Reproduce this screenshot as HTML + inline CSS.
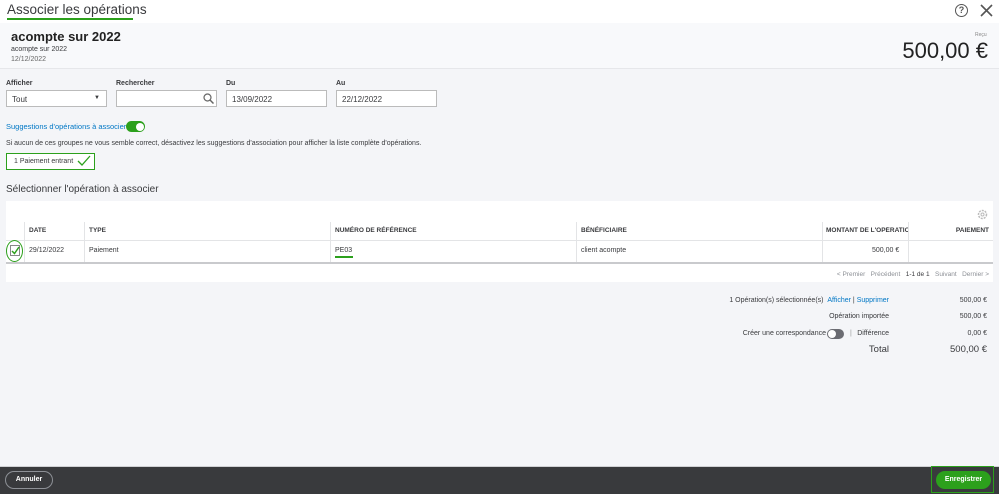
<!DOCTYPE html>
<html><head><meta charset="utf-8"><style>
*{margin:0;padding:0;box-sizing:border-box}
body{width:999px;height:494px;overflow:hidden;background:#f4f5f8;font-family:"Liberation Sans",sans-serif;color:#393a3d;position:relative}
.a{position:absolute;white-space:nowrap}
.inp{position:absolute;height:17px;background:#fff;border:1px solid #bbb;font-size:8px;padding:4px 5px}
.lbl{position:absolute;font-size:7px;color:#393a3d}
.th{position:absolute;top:227px;font-size:6.5px;font-weight:bold;color:#393a3d;white-space:nowrap}
.td{position:absolute;top:247px;font-size:7px;color:#393a3d}
.sep{position:absolute;width:1px;background:#e3e4e6}
.r{position:absolute;text-align:right;font-size:7px;white-space:nowrap;line-height:10px}
</style></head><body>
<div class="a" style="left:0;top:0;width:999px;height:23px;background:#fff"></div>
<div class="a" style="left:7px;top:2px;font-size:13.5px;color:#393a3d;line-height:16px">Associer les opérations</div>
<div class="a" style="left:7px;top:18px;width:126px;height:2px;background:#2ca01c"></div>
<div class="a" style="left:955px;top:4px;width:13px;height:13px;border:1.5px solid #555;border-radius:50%;font-size:9px;font-weight:bold;text-align:center;line-height:10px;color:#555">?</div>
<svg class="a" style="left:980px;top:4px" width="13" height="13"><path d="M1 1L12 12M12 1L1 12" stroke="#555" stroke-width="1.6"/></svg>
<div class="a" style="left:0;top:23px;width:999px;height:46px;background:#f8f9fb;border-bottom:1px solid #e6e7ea"></div>
<div class="a" style="left:11px;top:29px;font-size:13px;font-weight:bold;color:#222">acompte sur 2022</div>
<div class="a" style="left:11px;top:46px;font-size:7px">acompte sur 2022</div>
<div class="a" style="left:11px;top:56px;font-size:7px;color:#666">12/12/2022</div>
<div class="a" style="left:975px;top:32px;font-size:5px;color:#888">Reçu</div>
<div class="a" style="right:11px;top:38px;font-size:22px;color:#222">500,00 €</div>
<div class="lbl" style="left:6px;top:80px;font-weight:bold">Afficher</div>
<div class="lbl" style="left:116px;top:80px;font-weight:bold">Rechercher</div>
<div class="lbl" style="left:226px;top:80px;font-weight:bold">Du</div>
<div class="lbl" style="left:336px;top:80px;font-weight:bold">Au</div>
<div class="inp" style="left:6px;top:90px;width:101px">Tout<span style="position:absolute;right:6px;top:4px;font-size:6px">▼</span></div>
<div class="inp" style="left:116px;top:90px;width:101px"><svg style="position:absolute;right:2px;top:2px" width="11" height="11"><circle cx="4.5" cy="4.5" r="3.5" stroke="#666" fill="none" stroke-width="1.2"/><path d="M7 7L10.5 10.5" stroke="#666" stroke-width="1.5"/></svg></div>
<div class="inp" style="left:226px;top:90px;width:101px">13/09/2022</div>
<div class="inp" style="left:336px;top:90px;width:101px">22/12/2022</div>
<div class="a" style="left:6px;top:122px;font-size:7.5px;color:#0077c5">Suggestions d'opérations à associer</div>
<div class="a" style="left:126px;top:121px;width:19px;height:11px;border-radius:6px;background:#2ca01c"><div style="position:absolute;right:1.5px;top:1.5px;width:8px;height:8px;border-radius:50%;background:#fff"></div></div>
<div class="a" style="left:6px;top:140px;font-size:7px">Si aucun de ces groupes ne vous semble correct, désactivez les suggestions d'association pour afficher la liste complète d'opérations.</div>
<div class="a" style="left:6px;top:153px;width:89px;height:17px;border:1px solid #2ca01c;background:#fff;font-size:7px;padding:4px 7px">1 Paiement entrant</div>
<svg class="a" style="left:77px;top:155px" width="14" height="12"><path d="M1 6L5 10L13 1" stroke="#2ca01c" fill="none" stroke-width="1.3"/></svg>
<div class="a" style="left:6px;top:184px;font-size:10px;color:#393a3d">Sélectionner l'opération à associer</div>
<div class="a" style="left:6px;top:201px;width:987px;height:81px;background:#fff"></div>
<svg class="a" style="left:977px;top:209px" width="11" height="11"><circle cx="5.5" cy="5.5" r="4" stroke="#bbb" fill="none" stroke-width="1.5" stroke-dasharray="2 1"/><circle cx="5.5" cy="5.5" r="1.5" stroke="#bbb" fill="none"/></svg>
<div class="sep" style="left:24px;top:222px;height:41px"></div>
<div class="sep" style="left:84px;top:222px;height:41px"></div>
<div class="sep" style="left:330px;top:222px;height:41px"></div>
<div class="sep" style="left:576px;top:222px;height:41px"></div>
<div class="sep" style="left:822px;top:222px;height:41px"></div>
<div class="sep" style="left:908px;top:222px;height:41px"></div>
<div class="a" style="left:6px;top:240px;width:987px;height:1px;background:#e3e4e6"></div>
<div class="a" style="left:6px;top:262px;width:987px;height:2px;background:#c9cacd"></div>
<div class="th" style="left:29px">DATE</div>
<div class="th" style="left:89px">TYPE</div>
<div class="th" style="left:335px">NUMÉRO DE RÉFÉRENCE</div>
<div class="th" style="left:581px">BÉNÉFICIAIRE</div>
<div class="th" style="left:826px;width:82px;overflow:hidden">MONTANT DE L'OPÉRATION</div>
<div class="th" style="right:10px">PAIEMENT</div>
<div class="a" style="left:6px;top:240px;width:17px;height:22px;border:1.5px solid #2ca01c;border-radius:50%"></div>
<div class="a" style="left:10px;top:245px;width:10px;height:11px;border:1px solid #888;background:#fff"></div>
<svg class="a" style="left:11px;top:246px" width="9" height="9"><path d="M1 5L3.5 7.5L8 1" stroke="#2ca01c" fill="none" stroke-width="1.5"/></svg>
<div class="td" style="left:29px">29/12/2022</div>
<div class="td" style="left:89px">Paiement</div>
<div class="td" style="left:335px">PE03</div>
<div class="a" style="left:335px;top:256px;width:18px;height:2px;background:#2ca01c"></div>
<div class="td" style="left:581px">client acompte</div>
<div class="td" style="left:872px">500,00 €</div>
<div class="a" style="right:10px;top:271px;font-size:6.5px;color:#8d9096">&lt; Premier &nbsp; Précédent &nbsp; <span style="color:#393a3d">1-1 de 1</span> &nbsp; Suivant &nbsp; Dernier &gt;</div>
<div class="r" style="right:110px;top:296px">1 Opération(s) sélectionnée(s) &nbsp;<span style="color:#0077c5">Afficher</span> | <span style="color:#0077c5">Supprimer</span></div>
<div class="r" style="right:12px;top:296px">500,00 €</div>
<div class="r" style="right:110px;top:312px">Opération importée</div>
<div class="r" style="right:12px;top:312px">500,00 €</div>
<div class="r" style="right:173px;top:329px">Créer une correspondance</div>
<div class="a" style="left:827px;top:329px;width:17px;height:10px;border-radius:5px;background:#6b6c72"><div style="position:absolute;left:1px;top:1px;width:8px;height:8px;border-radius:50%;background:#fff"></div></div>
<div class="r" style="left:850px;top:329px;color:#999">|</div>
<div class="r" style="right:110px;top:329px">Différence</div>
<div class="r" style="right:12px;top:329px">0,00 €</div>
<div class="r" style="right:110px;top:343px;font-size:9.5px;line-height:13px">Total</div>
<div class="r" style="right:12px;top:343px;font-size:9.5px;line-height:13px">500,00 €</div>
<div class="a" style="left:0;top:466px;width:999px;height:28px;background:#393a3d;border-top:1px solid #d0d1d4"></div>
<div class="a" style="left:5px;top:471px;width:48px;height:18px;border:1px solid #8d9096;border-radius:9px;color:#fff;font-size:7px;font-weight:bold;text-align:center;line-height:16px">Annuler</div>
<div class="a" style="left:931px;top:466px;width:63px;height:27px;border:1.5px solid #2ca01c"></div>
<div class="a" style="left:936px;top:471px;width:55px;height:18px;background:#2ca01c;border-radius:9px;color:#fff;font-size:7px;font-weight:bold;text-align:center;line-height:18px">Enregistrer</div>
</body></html>
